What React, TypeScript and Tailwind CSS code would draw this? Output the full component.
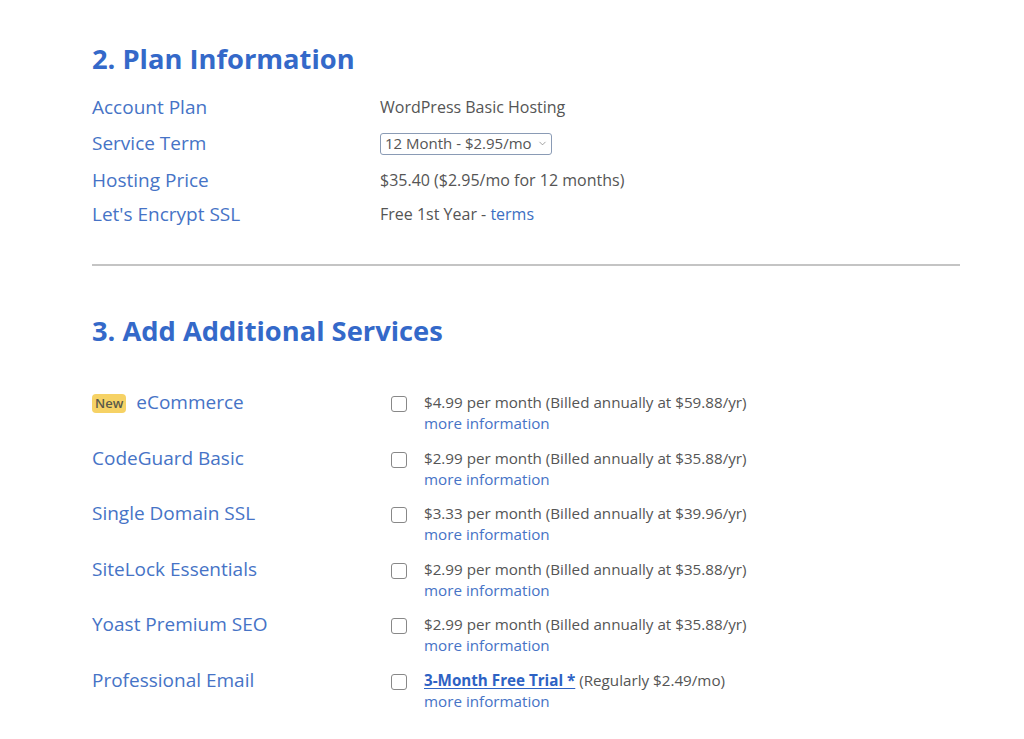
import { ChevronDown } from "lucide-react";

const plan = [
  { label: "Account Plan", h: "h-[36px]" },
  { label: "Service Term", h: "h-[37px]" },
  { label: "Hosting Price", h: "h-[36px]" },
  { label: "Let's Encrypt SSL", h: "h-[32px]" },
];

const services = [
  { name: "eCommerce", isNew: true, price: "$4.99 per month (Billed annually at $59.88/yr)" },
  { name: "CodeGuard Basic", price: "$2.99 per month (Billed annually at $35.88/yr)" },
  { name: "Single Domain SSL", price: "$3.33 per month (Billed annually at $39.96/yr)" },
  { name: "SiteLock Essentials", price: "$2.99 per month (Billed annually at $35.88/yr)" },
  { name: "Yoast Premium SEO", price: "$2.99 per month (Billed annually at $35.88/yr)" },
  { name: "Professional Email", trial: true, price: "" },
];

function PlanValue({ i }: { i: number }) {
  if (i === 0) return <span>WordPress Basic Hosting</span>;
  if (i === 1)
    return (
      <div className="flex items-center h-[22px] pl-[4px] pr-[3px] border border-[#8a9bb5] rounded-[3px] text-[15px] text-[#555]">
        12 Month - $2.95/mo
        <ChevronDown className="w-[11px] h-[11px] ml-[5px] text-[#777]" strokeWidth={1.5} />
      </div>
    );
  if (i === 2) return <span>$35.40 ($2.95/mo for 12 months)</span>;
  return (
    <span>
      Free 1st Year - <a className="text-[#3d6fc2]">terms</a>
    </span>
  );
}

export default function App() {
  return (
    <div
      className="bg-white w-[1024px] h-[739px] overflow-hidden pl-[92px] pr-[64px] pt-[40px]"
      style={{ fontFamily: '"Open Sans", sans-serif' }}
    >
      {/* Plan information */}
      <h2 className="text-[27.3px] leading-[38px] font-bold text-[#3469c9]">2. Plan Information</h2>
      <div className="mt-[11px]">
        {plan.map((row, i) => (
          <div key={row.label} className={`flex items-center ${row.h}`}>
            <div className="w-[288px] text-[19px] text-[#4673c6]">{row.label}</div>
            <div className="text-[16px] text-[#555]">
              <PlanValue i={i} />
            </div>
          </div>
        ))}
      </div>

      <hr className="mt-[34px] border-0 h-[2px] bg-[#c4c4c4]" />

      {/* Additional services */}
      <h2 className="mt-[46px] text-[27.3px] leading-[38px] font-bold text-[#3469c9]">
        3. Add Additional Services
      </h2>
      <div className="mt-[40px] flex flex-col">
        {services.map((s) => (
          <div key={s.name} className="flex h-[55.6px]">
            <div className="w-[299px] flex items-start -mt-[2px] text-[19px] text-[#4673c6]">
              {s.isNew && (
                <span className="mr-[10px] mt-[6px] px-[3px] h-[19px] leading-[19px] rounded-[4px] bg-[#f6d265] text-[13px] font-semibold text-[#5a5a4a]">
                  New
                </span>
              )}
              {s.name}
            </div>
            <div className="w-[16px] h-[16px] mt-[6px] mr-[17px] border-[1.5px] border-[#888] rounded-[3px]" />
            <div className="flex flex-col text-[15.2px] leading-[21px] pt-[2px]">
              {s.trial ? (
                <span className="text-[#555]">
                  <a className="font-bold text-[#2d62c4] underline underline-offset-2">3-Month Free Trial *</a>{" "}
                  (Regularly $2.49/mo)
                </span>
              ) : (
                <span className="text-[#555]">{s.price}</span>
              )}
              <a className="text-[#4673c6]">more information</a>
            </div>
          </div>
        ))}
      </div>
    </div>
  );
}
